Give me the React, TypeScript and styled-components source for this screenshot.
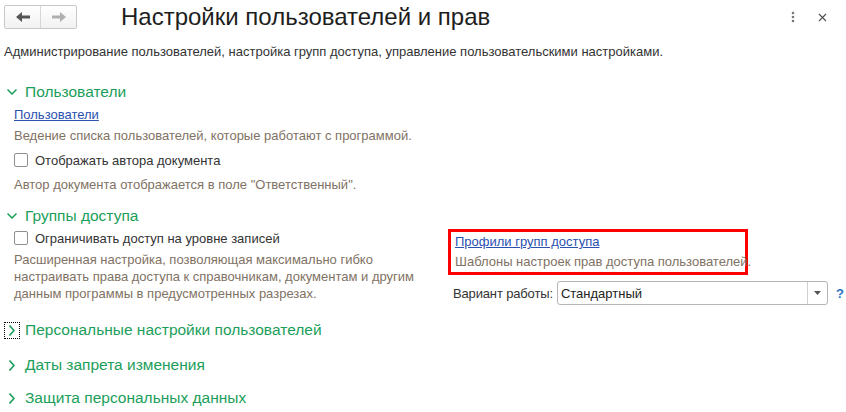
import React from "react";
import styled, { createGlobalStyle } from "styled-components";

const GlobalStyle = createGlobalStyle`
  html, body { margin: 0; padding: 0; background: #fff; }
  body {
    font-family: "Liberation Sans", Arial, sans-serif;
    font-size: 13px;
    color: #333;
  }
`;

const GREEN = "#1b9e5a";
const BLUE = "#2a50b0";
const NOTE = "#7f7264";

const Page = styled.div`
  width: 846px;
  height: 412px;
  overflow: hidden;
  background: #fff;
  display: flex;
  flex-direction: column;
  white-space: nowrap;
`;

const TopBar = styled.div`
  display: flex;
  align-items: center;
  height: 34px;
  padding-left: 4px;
  padding-right: 14px;
`;

const NavGroup = styled.div`
  display: flex;
  height: 22px;
  border: 1px solid #c8c8c8;
  border-radius: 2px;
  background: linear-gradient(#ffffff, #f1f1f1);
`;

const NavButton = styled.div<{ $last?: boolean }>`
  width: 35px;
  display: flex;
  align-items: center;
  justify-content: center;
  border-left: ${(p) => (p.$last ? "1px solid #d6d6d6" : "none")};
`;

const Title = styled.div`
  margin-left: 44px;
  font-size: 24px;
  color: #1e1e1e;
  flex: 1;
`;

const HeadIcon = styled.div`
  width: 20px;
  display: flex;
  justify-content: center;
  align-items: center;
  margin-left: 9px;
`;

const Description = styled.div`
  margin-top: 10px;
  padding-left: 4px;
  line-height: 16px;
  color: #333;
`;

const Section = styled.div<{ $mt: number }>`
  margin-top: ${(p) => p.$mt}px;
`;

const SectionHeader = styled.div`
  display: flex;
  align-items: center;
  height: 24px;
  padding-left: 4px;
  gap: 5px;
  font-size: 15.5px;
  color: ${GREEN};
`;

const Chevron = styled.div<{ $focused?: boolean }>`
  width: 14px;
  height: 15px;
  display: flex;
  align-items: center;
  justify-content: center;
  border: 1px dotted ${(p) => (p.$focused ? "#000" : "transparent")};
`;

const Body = styled.div`
  padding-left: 14px;
  display: flex;
  flex-direction: column;
`;

const Row = styled.div<{ $h: number }>`
  height: ${(p) => p.$h}px;
  display: flex;
  align-items: center;
`;

const Link = styled.a`
  color: ${BLUE};
  text-decoration: underline;
  cursor: pointer;
`;

const Note = styled.div`
  color: ${NOTE};
  line-height: 17px;
`;

const CheckLabel = styled.label`
  display: flex;
  align-items: center;
  gap: 7px;
  color: #333;
`;

const Box = styled.span`
  width: 12px;
  height: 12px;
  border: 1px solid #8f8f8f;
  border-radius: 2px;
  background: #fff;
`;

const Columns = styled.div`
  display: flex;
`;

const LeftCol = styled.div`
  width: 434px;
  flex-shrink: 0;
  padding-left: 14px;
  display: flex;
  flex-direction: column;
`;

const RightCol = styled.div`
  flex-shrink: 0;
  display: flex;
  flex-direction: column;
  padding-top: 1px;
`;

const Highlight = styled.div`
  width: 290px;
  height: 40px;
  border: 3px solid #f00;
  padding-left: 4px;
  display: flex;
  flex-direction: column;
`;

const VariantRow = styled.div`
  display: flex;
  align-items: center;
  margin-top: 6px;
  padding-left: 5px;
  height: 24px;
`;

const Label = styled.span`
  letter-spacing: -0.15px;
`;

const Select = styled.div`
  margin-left: 4px;
  width: 269px;
  height: 22px;
  border: 1px solid #b5b5b5;
  border-radius: 3px;
  display: flex;
  align-items: stretch;
`;

const SelectValue = styled.div`
  flex: 1;
  display: flex;
  align-items: center;
  padding-left: 3px;
  color: #222;
`;

const SelectButton = styled.div`
  width: 19px;
  border-left: 1px solid #d0d0d0;
  display: flex;
  align-items: center;
  justify-content: center;
`;

const Help = styled.span`
  margin-left: 8px;
  color: #2a74c4;
  font-weight: bold;
  font-size: 13px;
`;

const ArrowLeft = ({ color }: { color: string }) => (
  <svg width="14" height="10" viewBox="0 0 14 10">
    <polygon points="0,5 6,0 6,3.5 14,3.5 14,6.5 6,6.5 6,10" fill={color} />
  </svg>
);

const ArrowRight = ({ color }: { color: string }) => (
  <svg width="14" height="10" viewBox="0 0 14 10">
    <polygon points="14,5 8,0 8,3.5 0,3.5 0,6.5 8,6.5 8,10" fill={color} />
  </svg>
);

const ChevronDown = () => (
  <svg width="10" height="6" viewBox="0 0 10 6">
    <polyline points="0.5,0.5 5,5 9.5,0.5" fill="none" stroke={GREEN} strokeWidth="1.5" />
  </svg>
);

const ChevronRight = () => (
  <svg width="6" height="11" viewBox="0 0 6 11">
    <polyline points="0.5,0.5 5,5.5 0.5,10.5" fill="none" stroke={GREEN} strokeWidth="1.6" />
  </svg>
);

const Header = ({ title, open, focused }: { title: string; open?: boolean; focused?: boolean }) => (
  <SectionHeader>
    <Chevron $focused={focused}>{open ? <ChevronDown /> : <ChevronRight />}</Chevron>
    <span>{title}</span>
  </SectionHeader>
);

const Check = ({ label }: { label: string }) => (
  <CheckLabel>
    <Box />
    <span>{label}</span>
  </CheckLabel>
);

export default function App() {
  return (
    <Page>
      <GlobalStyle />
      <TopBar>
        <NavGroup>
          <NavButton>
            <ArrowLeft color="#555" />
          </NavButton>
          <NavButton $last>
            <ArrowRight color="#b0b0b0" />
          </NavButton>
        </NavGroup>
        <Title>Настройки пользователей и прав</Title>
        <HeadIcon>
          <svg width="4" height="12" viewBox="0 0 4 12">
            <circle cx="2" cy="2" r="1.3" fill="#777" />
            <circle cx="2" cy="6" r="1.3" fill="#777" />
            <circle cx="2" cy="10" r="1.3" fill="#777" />
          </svg>
        </HeadIcon>
        <HeadIcon>
          <svg width="9" height="9" viewBox="0 0 9 9">
            <path d="M1 1 L8 8 M8 1 L1 8" stroke="#555" strokeWidth="1.2" />
          </svg>
        </HeadIcon>
      </TopBar>

      <Description>
        Администрирование пользователей, настройка групп доступа, управление пользовательскими настройками.
      </Description>

      <Section $mt={20}>
        <Header title="Пользователи" open />
        <Body>
          <Row $h={20}>
            <Link>Пользователи</Link>
          </Row>
          <Row $h={22}>
            <Note>Ведение списка пользователей, которые работают с программой.</Note>
          </Row>
          <Row $h={28}>
            <Check label="Отображать автора документа" />
          </Row>
          <Row $h={20}>
            <Note>Автор документа отображается в поле "Ответственный".</Note>
          </Row>
        </Body>
      </Section>

      <Section $mt={10}>
        <Header title="Группы доступа" open />
        <Columns>
          <LeftCol>
            <Row $h={20}>
              <Check label="Ограничивать доступ на уровне записей" />
            </Row>
            <Note style={{ marginTop: 3 }}>
              Расширенная настройка, позволяющая максимально гибко
              <br />
              настраивать права доступа к справочникам, документам и другим
              <br />
              данным программы в предусмотренных разрезах.
            </Note>
          </LeftCol>
          <RightCol>
            <Highlight>
              <Row $h={19}>
                <Link>Профили групп доступа</Link>
              </Row>
              <Row $h={21}>
                <Note>Шаблоны настроек прав доступа пользователей.</Note>
              </Row>
            </Highlight>
            <VariantRow>
              <Label>Вариант работы:</Label>
              <Select>
                <SelectValue>Стандартный</SelectValue>
                <SelectButton>
                  <svg width="7" height="4" viewBox="0 0 7 4">
                    <polygon points="0,0 7,0 3.5,4" fill="#555" />
                  </svg>
                </SelectButton>
              </Select>
              <Help>?</Help>
            </VariantRow>
          </RightCol>
        </Columns>
      </Section>

      <Section $mt={13}>
        <Header title="Персональные настройки пользователей" focused />
      </Section>
      <Section $mt={11}>
        <Header title="Даты запрета изменения" />
      </Section>
      <Section $mt={9}>
        <Header title="Защита персональных данных" />
      </Section>
    </Page>
  );
}
